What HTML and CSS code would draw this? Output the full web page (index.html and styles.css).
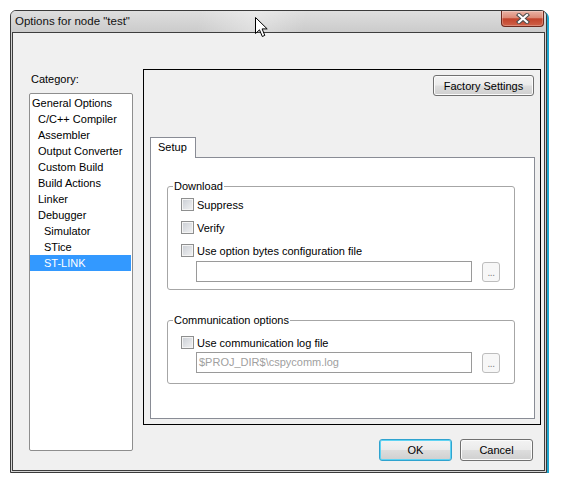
FILE: index.html
```html
<!DOCTYPE html>
<html>
<head>
<meta charset="utf-8">
<link rel="stylesheet" href="styles.css">
</head>
<body>
<div class="window">
  <div class="titlebar">
    <span class="title">Options for node "test"</span>
    <div class="close">
      <svg width="14" height="11" viewBox="0 0 14 11">
        <path d="M3 2 L11 9 M11 2 L3 9" stroke="#4d4d4d" stroke-width="4.2" stroke-linecap="square" fill="none"/>
        <path d="M3 2 L11 9 M11 2 L3 9" stroke="#ffffff" stroke-width="2.2" stroke-linecap="square" fill="none"/>
      </svg>
    </div>
  </div>
  <div class="body">
    <div class="left">
      <div class="label">Category:</div>
      <div class="list">
        <div class="item l0">General Options</div>
        <div class="item l1">C/C++ Compiler</div>
        <div class="item l1">Assembler</div>
        <div class="item l1">Output Converter</div>
        <div class="item l1">Custom Build</div>
        <div class="item l1">Build Actions</div>
        <div class="item l1">Linker</div>
        <div class="item l1">Debugger</div>
        <div class="item l2">Simulator</div>
        <div class="item l2">STice</div>
        <div class="item l2 sel">ST-LINK</div>
      </div>
    </div>
    <div class="right">
      <div class="panel">
        <div class="factory-row"><div class="btn factory">Factory Settings</div></div>
        <div class="tabs"><div class="tab">Setup</div></div>
        <div class="page">
          <fieldset class="group download">
            <legend>Download</legend>
            <div class="gbody">
              <div class="check"><span class="box"></span><span>Suppress</span></div>
              <div class="check"><span class="box"></span><span>Verify</span></div>
              <div class="check"><span class="box"></span><span>Use option bytes configuration file</span></div>
              <div class="filerow"><div class="field"></div><div class="browse">...</div></div>
            </div>
          </fieldset>
          <fieldset class="group comm">
            <legend>Communication options</legend>
            <div class="gbody">
              <div class="check"><span class="box"></span><span>Use communication log file</span></div>
              <div class="filerow"><div class="field disabled">$PROJ_DIR$\cspycomm.log</div><div class="browse">...</div></div>
            </div>
          </fieldset>
        </div>
      </div>
      <div class="buttons">
        <div class="btn ok">OK</div>
        <div class="btn">Cancel</div>
      </div>
    </div>
  </div>
</div>
<svg class="cursor" width="14" height="23" viewBox="0 0 14 23">
  <path d="M0.5 0.5 L0.5 16.5 L4.5 12.8 L7.3 19.5 L9.8 18.4 L7.1 11.9 L12.2 11.9 Z" fill="#ffffff" stroke="#000000" stroke-width="1" stroke-linejoin="miter"/>
</svg>
</body>
</html>
```
FILE: styles.css
```css
body {
  margin: 0;
  background: #ffffff;
  font-family: "Liberation Sans", Arial, sans-serif;
  font-size: 11px;
  color: #000;
}

.window {
  margin: 10px 0 0 10px;
  width: 537px;
  height: 463px;
  box-sizing: border-box;
  border: 1px solid #3a3a3a;
  border-radius: 6px 6px 0 0;
  background: #d4d4d4;
  box-shadow: 1px 1px 0 #1fa6cf, 2px 2px 0 #1fa6cf;
  display: flex;
  flex-direction: column;
}

.titlebar {
  height: 21px;
  flex: none;
  display: flex;
  justify-content: space-between;
  align-items: flex-start;
  padding: 0 2px 0 4px;
  border-radius: 5px 5px 0 0;
  background:
    linear-gradient(100deg, rgba(255,255,255,0) 35%, rgba(255,255,255,0.35) 45%, rgba(255,255,255,0) 55%),
    linear-gradient(#dedede, #cbcbcb);
}

.title {
  font-size: 11.5px;
  line-height: 20px;
  color: #111;
}

.close {
  width: 43px;
  height: 16px;
  box-sizing: border-box;
  border: 1px solid #6e2a1e;
  border-top: none;
  border-radius: 0 0 4px 4px;
  background: linear-gradient(#eab3a5 0%, #dc8a76 45%, #c2432b 52%, #cf6249 100%);
  box-shadow: inset 0 0 0 1px rgba(255,255,255,0.25);
  display: flex;
  align-items: center;
  justify-content: center;
}

.body {
  flex: 1;
  margin: 0 1px 1px;
  border: 1px solid #3d3d3d;
  background: #f0f0f0;
  display: flex;
  padding: 36px 3px 0 16px;
}

.left {
  width: 104px;
  flex: none;
}

.label {
  margin-top: 4px;
  line-height: 13px;
  margin-bottom: 7px;
  padding-left: 2px;
}

.list {
  height: 358px;
  box-sizing: border-box;
  border: 1px solid #8e8e8e;
  border-radius: 2px;
  background: #fff;
  padding: 1px 1px 0 0;
}

.item {
  height: 16px;
  line-height: 16px;
  white-space: nowrap;
}

.l0 { padding-left: 2px; }
.l1 { padding-left: 8px; }
.l2 { padding-left: 14px; }

.sel {
  background: #3399ff;
  color: #fff;
}

.right {
  flex: 1;
  margin-left: 10px;
  display: flex;
  flex-direction: column;
}

.panel {
  height: 356px;
  box-sizing: border-box;
  border: 1px solid #000;
  display: flex;
  flex-direction: column;
  padding: 5px 5px 0 6px;
}

.factory-row {
  display: flex;
  justify-content: flex-end;
  padding-right: 1px;
}

.btn {
  box-sizing: border-box;
  border: 1px solid #707070;
  border-radius: 3px;
  background: linear-gradient(#f3f3f3 0%, #ebebeb 48%, #dddddd 52%, #cfcfcf 100%);
  box-shadow: inset 0 0 0 1px #fbfbfb;
  display: flex;
  align-items: center;
  justify-content: center;
}

.factory {
  width: 101px;
  height: 21px;
}

.tabs {
  margin-top: 41px;
  height: 20px;
  display: flex;
}

.tab {
  position: relative;
  z-index: 1;
  width: 46px;
  height: 21px;
  box-sizing: border-box;
  border: 1px solid #898c95;
  border-bottom: none;
  background: #fff;
  padding-left: 7px;
  line-height: 19px;
}

.page {
  height: 262px;
  box-sizing: border-box;
  border: 1px solid #898c95;
  background: #fff;
  padding: 0 19px 0 16px;
}

.group {
  margin: 0;
  padding: 0;
  min-width: 0;
  border: 1px solid #a6a6a6;
  border-radius: 3px;
}

.group legend {
  margin-left: 5px;
  padding: 0 1px;
  line-height: 13px;
}

.download { margin-top: 22px; }
.comm { margin-top: 24px; }

.gbody {
  padding: 5px 14px 7px 13px;
}

.comm .gbody {
  padding-top: 9px;
  padding-bottom: 10px;
}

.check {
  display: flex;
  align-items: center;
  height: 13px;
  gap: 3px;
}

.check + .check {
  margin-top: 10px;
}

.box {
  width: 13px;
  height: 13px;
  box-sizing: border-box;
  border: 1px solid #8e8f8f;
  background: linear-gradient(135deg, #c9cdd3 0%, #e2e4e7 60%, #f1f1f2 100%);
  box-shadow: inset 0 0 0 1px #f4f4f4;
  flex: none;
}

.filerow {
  margin-top: 4px;
  padding-left: 15px;
  display: flex;
  align-items: flex-end;
  gap: 10px;
}

.comm .filerow {
  margin-top: 3px;
}

.field {
  width: 276px;
  height: 21px;
  box-sizing: border-box;
  border: 1px solid #9a9a9a;
  background: #fff;
  padding-left: 2px;
  line-height: 19px;
}

.field.disabled {
  color: #a0a0a0;
}

.browse {
  width: 18px;
  height: 20px;
  box-sizing: border-box;
  border: 1px solid #bdbdbd;
  border-radius: 3px;
  background: #f7f7f7;
  color: #808080;
  font-size: 10px;
  line-height: 20px;
  text-align: center;
  letter-spacing: -0.5px;
}

.buttons {
  margin-top: 14px;
  display: flex;
  justify-content: flex-end;
  gap: 8px;
  padding-right: 8px;
}

.buttons .btn {
  width: 73px;
  height: 22px;
}

.btn.ok {
  border-color: #2fa3cf;
  box-shadow: inset 0 0 0 1px #5fd3f3;
}

.cursor {
  position: absolute;
  left: 255px;
  top: 17px;
}
```
